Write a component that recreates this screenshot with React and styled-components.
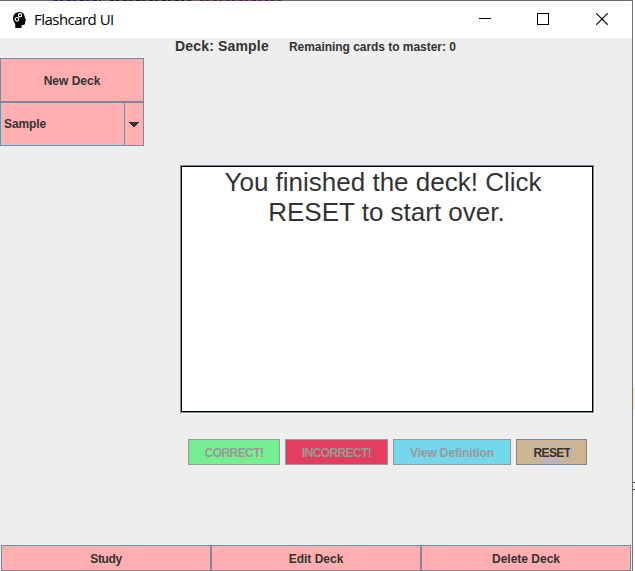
import React from "react";
import styled, { createGlobalStyle } from "styled-components";

const GlobalStyle = createGlobalStyle`
  * { box-sizing: border-box; }
  body { margin: 0; background: #fff; overflow: hidden; }
`;

const Desktop = styled.div`
  display: flex;
  width: 635px;
  height: 571px;
  overflow: hidden;
  background: #fff;
`;

const Window = styled.div`
  display: flex;
  flex-direction: column;
  width: 633px;
  height: 571px;
  border-right: 1px solid #707070;
  background: #eeeeee;
  color: #333333;
  font: bold 12px "Liberation Sans", Arial, sans-serif;
`;

const TopEdge = styled.div`
  display: flex;
  gap: 9px;
  height: 1px;
  flex: none;
  padding-left: 54px;
  background: #69676a;
`;

const EdgeMarks = styled.div`
  width: ${(p) => p.$width}px;
  background: repeating-linear-gradient(90deg, ${(p) => p.$color} 0 4px, #69676a 4px 6px, ${(p) => p.$color} 6px 9px, #5b5860 9px 13px);
`;

const Backdrop = styled.div`
  width: 2px;
  padding-top: 388px;
`;

const BackdropMark = styled.div`
  width: 2px;
  height: ${(p) => p.$height}px;
  margin-bottom: ${(p) => p.$gap || 0}px;
  background: ${(p) => p.$color};
`;

const TitleBar = styled.header`
  display: flex;
  align-items: center;
  height: 37px;
  flex: none;
  padding-left: 12px;
  background: #fff;
`;

const WindowTitle = styled.h1`
  flex: 1;
  margin: -2px 0 0 7px;
  color: #000;
  font: 15px/20px "Open Sans", "Noto Sans", sans-serif;
  letter-spacing: -0.53px;
`;

const WindowControls = styled.div`
  display: flex;
  width: 176px;
  height: 37px;
`;

const Control = styled.button`
  width: ${(p) => p.$width}px;
  height: 37px;
  padding: 0 0 ${(p) => p.$lift || 0}px;
  border: 0;
  background: transparent;
  display: flex;
  align-items: center;
  justify-content: center;
`;

const StatusBar = styled.div`
  display: flex;
  align-items: center;
  gap: 20px;
  height: 16px;
  flex: none;
  padding-left: 175px;
  white-space: nowrap;
`;

const DeckName = styled.span`
  font-size: 14px;
  line-height: 16px;
  letter-spacing: 0.17px;
`;

const Remaining = styled.span`
  line-height: 16px;
  padding-top: 1px;
  letter-spacing: -0.04px;
`;

const Main = styled.main`
  display: flex;
  flex: 1;
  padding-top: 4px;
`;

const Sidebar = styled.aside`
  width: 144px;
  margin-right: 36px;
`;

const Button = styled.button`
  display: flex;
  align-items: center;
  justify-content: center;
  width: ${(p) => p.$width}px;
  height: ${(p) => p.$height || 26}px;
  padding: 2px 0 0;
  border: 1px solid ${(p) => (p.disabled ? "#999999" : "#7a8a99")};
  border-radius: 0;
  background: ${(p) => p.$color || "#ffafaf"};
  color: ${(p) => (p.disabled ? "#999999" : "#333333")};
  font: inherit;
  line-height: 14px;
  letter-spacing: ${(p) => p.$tracking || 0}px;
  white-space: nowrap;
`;

const DeckSelect = styled.div`
  display: flex;
  height: 44px;
  border: 1px solid #7a8a99;
  background: #ffafaf;
`;

const SelectedDeck = styled.div`
  display: flex;
  align-items: center;
  width: 123px;
  padding-left: 2px;
  border: 1px solid #b8cfe5;
  letter-spacing: -0.1px;
`;

const SelectArrow = styled.div`
  display: flex;
  align-items: center;
  justify-content: center;
  flex: 1;
  padding: 1px 1px 0 0;
  border-left: 1px solid #7a8a99;
`;

const StudyArea = styled.section`
  padding-top: 107px;
`;

const CardFrame = styled.div`
  width: 415px;
  height: 249px;
  border: 1px solid #7a8a99;
  border-right-color: #fff;
  border-bottom-color: #fff;
`;

const Card = styled.div`
  width: 413px;
  height: 247px;
  border: 1px solid #7a8a99;
  border-width: 0 1px 1px 0;
`;

const CardText = styled.div`
  height: 246px;
  border: 1px solid #000;
  background: #fff;
  font-size: 26px;
  font-weight: normal;
  line-height: 30px;
  text-align: center;
  white-space: nowrap;
`;

const CardLine = styled.div`
  padding-right: ${(p) => p.$trailing || 0}px;
`;

const Answers = styled.div`
  display: flex;
  gap: 5px;
  padding: 25px 0 0 8px;
`;

const FocusRing = styled.span`
  height: 18px;
  padding: 2px 0 0 1px;
  margin-top: -2px;
  outline: 1px solid #a3b8cc;
  line-height: 16px;
  outline-offset: -1px;
`;

const Footer = styled.footer`
  display: flex;
  height: 26px;
  flex: none;
  padding-left: 1px;
`;

const HeadIcon = () => (
  <svg width="15" height="18" viewBox="0 0 15 18">
    <path d="M3 2.5 Q5 .8 8 1 Q12.3 1.5 12.7 6 L14 9.5 L13 10.5 V13 Q12.5 14.3 9.7 14 L9.5 17 H3.3 L3.2 13 Q1 10.5 1 7 Q1 4.2 3 2.5Z" fill="#000" />
    <circle cx="8" cy="4.3" r="1.6" fill="none" stroke="#fff" strokeWidth="1.2" />
    <circle cx="5" cy="8.3" r="1.8" fill="none" stroke="#fff" strokeWidth="1.2" />
  </svg>
);

export default function App() {
  return (
    <Desktop>
      <GlobalStyle />
      <Window>
        <TopEdge>
          <EdgeMarks $width={47} $color="#241a4d" />
          <EdgeMarks $width={81} $color="#211c25" />
          <EdgeMarks $width={81} $color="#4b2049" />
        </TopEdge>
        <TitleBar>
          <HeadIcon />
          <WindowTitle>Flashcard UI</WindowTitle>
          <WindowControls>
            <Control $width={58} $lift={2} aria-label="Minimize">
              <svg width="12" height="12" shapeRendering="crispEdges"><path d="M0 5.5H12" stroke="#000" /></svg>
            </Control>
            <Control $width={58} $lift={1} aria-label="Maximize">
              <svg width="12" height="12" shapeRendering="crispEdges"><path d="M.5 .5H11.5V11.5H.5Z" fill="none" stroke="#000" /></svg>
            </Control>
            <Control $width={60} $lift={1} aria-label="Close">
              <svg width="12" height="12"><path d="M.3 .3L11.7 11.7M11.7 .3L.3 11.7" stroke="#000" strokeWidth="1.15" /></svg>
            </Control>
          </WindowControls>
        </TitleBar>
        <StatusBar>
          <DeckName>Deck: Sample</DeckName>
          <Remaining>Remaining cards to master: 0</Remaining>
        </StatusBar>
        <Main>
          <Sidebar>
            <Button $width={144} $height={44}>New Deck</Button>
            <DeckSelect>
              <SelectedDeck>Sample</SelectedDeck>
              <SelectArrow>
                <svg width="10" height="5" shapeRendering="crispEdges"><path d="M0 0H10V1H9V2H8V3H7V4H6V5H4V4H3V3H2V2H1V1H0Z" fill="#333" /></svg>
              </SelectArrow>
            </DeckSelect>
          </Sidebar>
          <StudyArea>
            <CardFrame>
              <Card>
                <CardText>
                  <CardLine $trailing={8}>You finished the deck! Click</CardLine>
                  <CardLine $trailing={1}>RESET to start over.</CardLine>
                </CardText>
              </Card>
            </CardFrame>
            <Answers>
              <Button $width={92} $tracking={-0.57} $color="#74ee90" disabled>CORRECT!</Button>
              <Button $width={103} $tracking={-0.62} $color="#e33e60" disabled>INCORRECT!</Button>
              <Button $width={118} $tracking={-0.12} $color="#75d7ec" disabled>View Definition</Button>
              <Button $width={71} $tracking={-0.6} $color="#cfb591"><FocusRing>RESET</FocusRing></Button>
            </Answers>
          </StudyArea>
        </Main>
        <Footer>
          <Button $width={210} $tracking={-0.4}>Study</Button>
          <Button $width={210}>Edit Deck</Button>
          <Button $width={210}>Delete Deck</Button>
        </Footer>
      </Window>
      <Backdrop>
        <BackdropMark $height={21} $gap={73} $color="#fbf0d8" />
        <BackdropMark $height={1} $gap={6} $color="#163047" />
        <BackdropMark $height={1} $color="#163047" />
      </Backdrop>
    </Desktop>
  );
}
